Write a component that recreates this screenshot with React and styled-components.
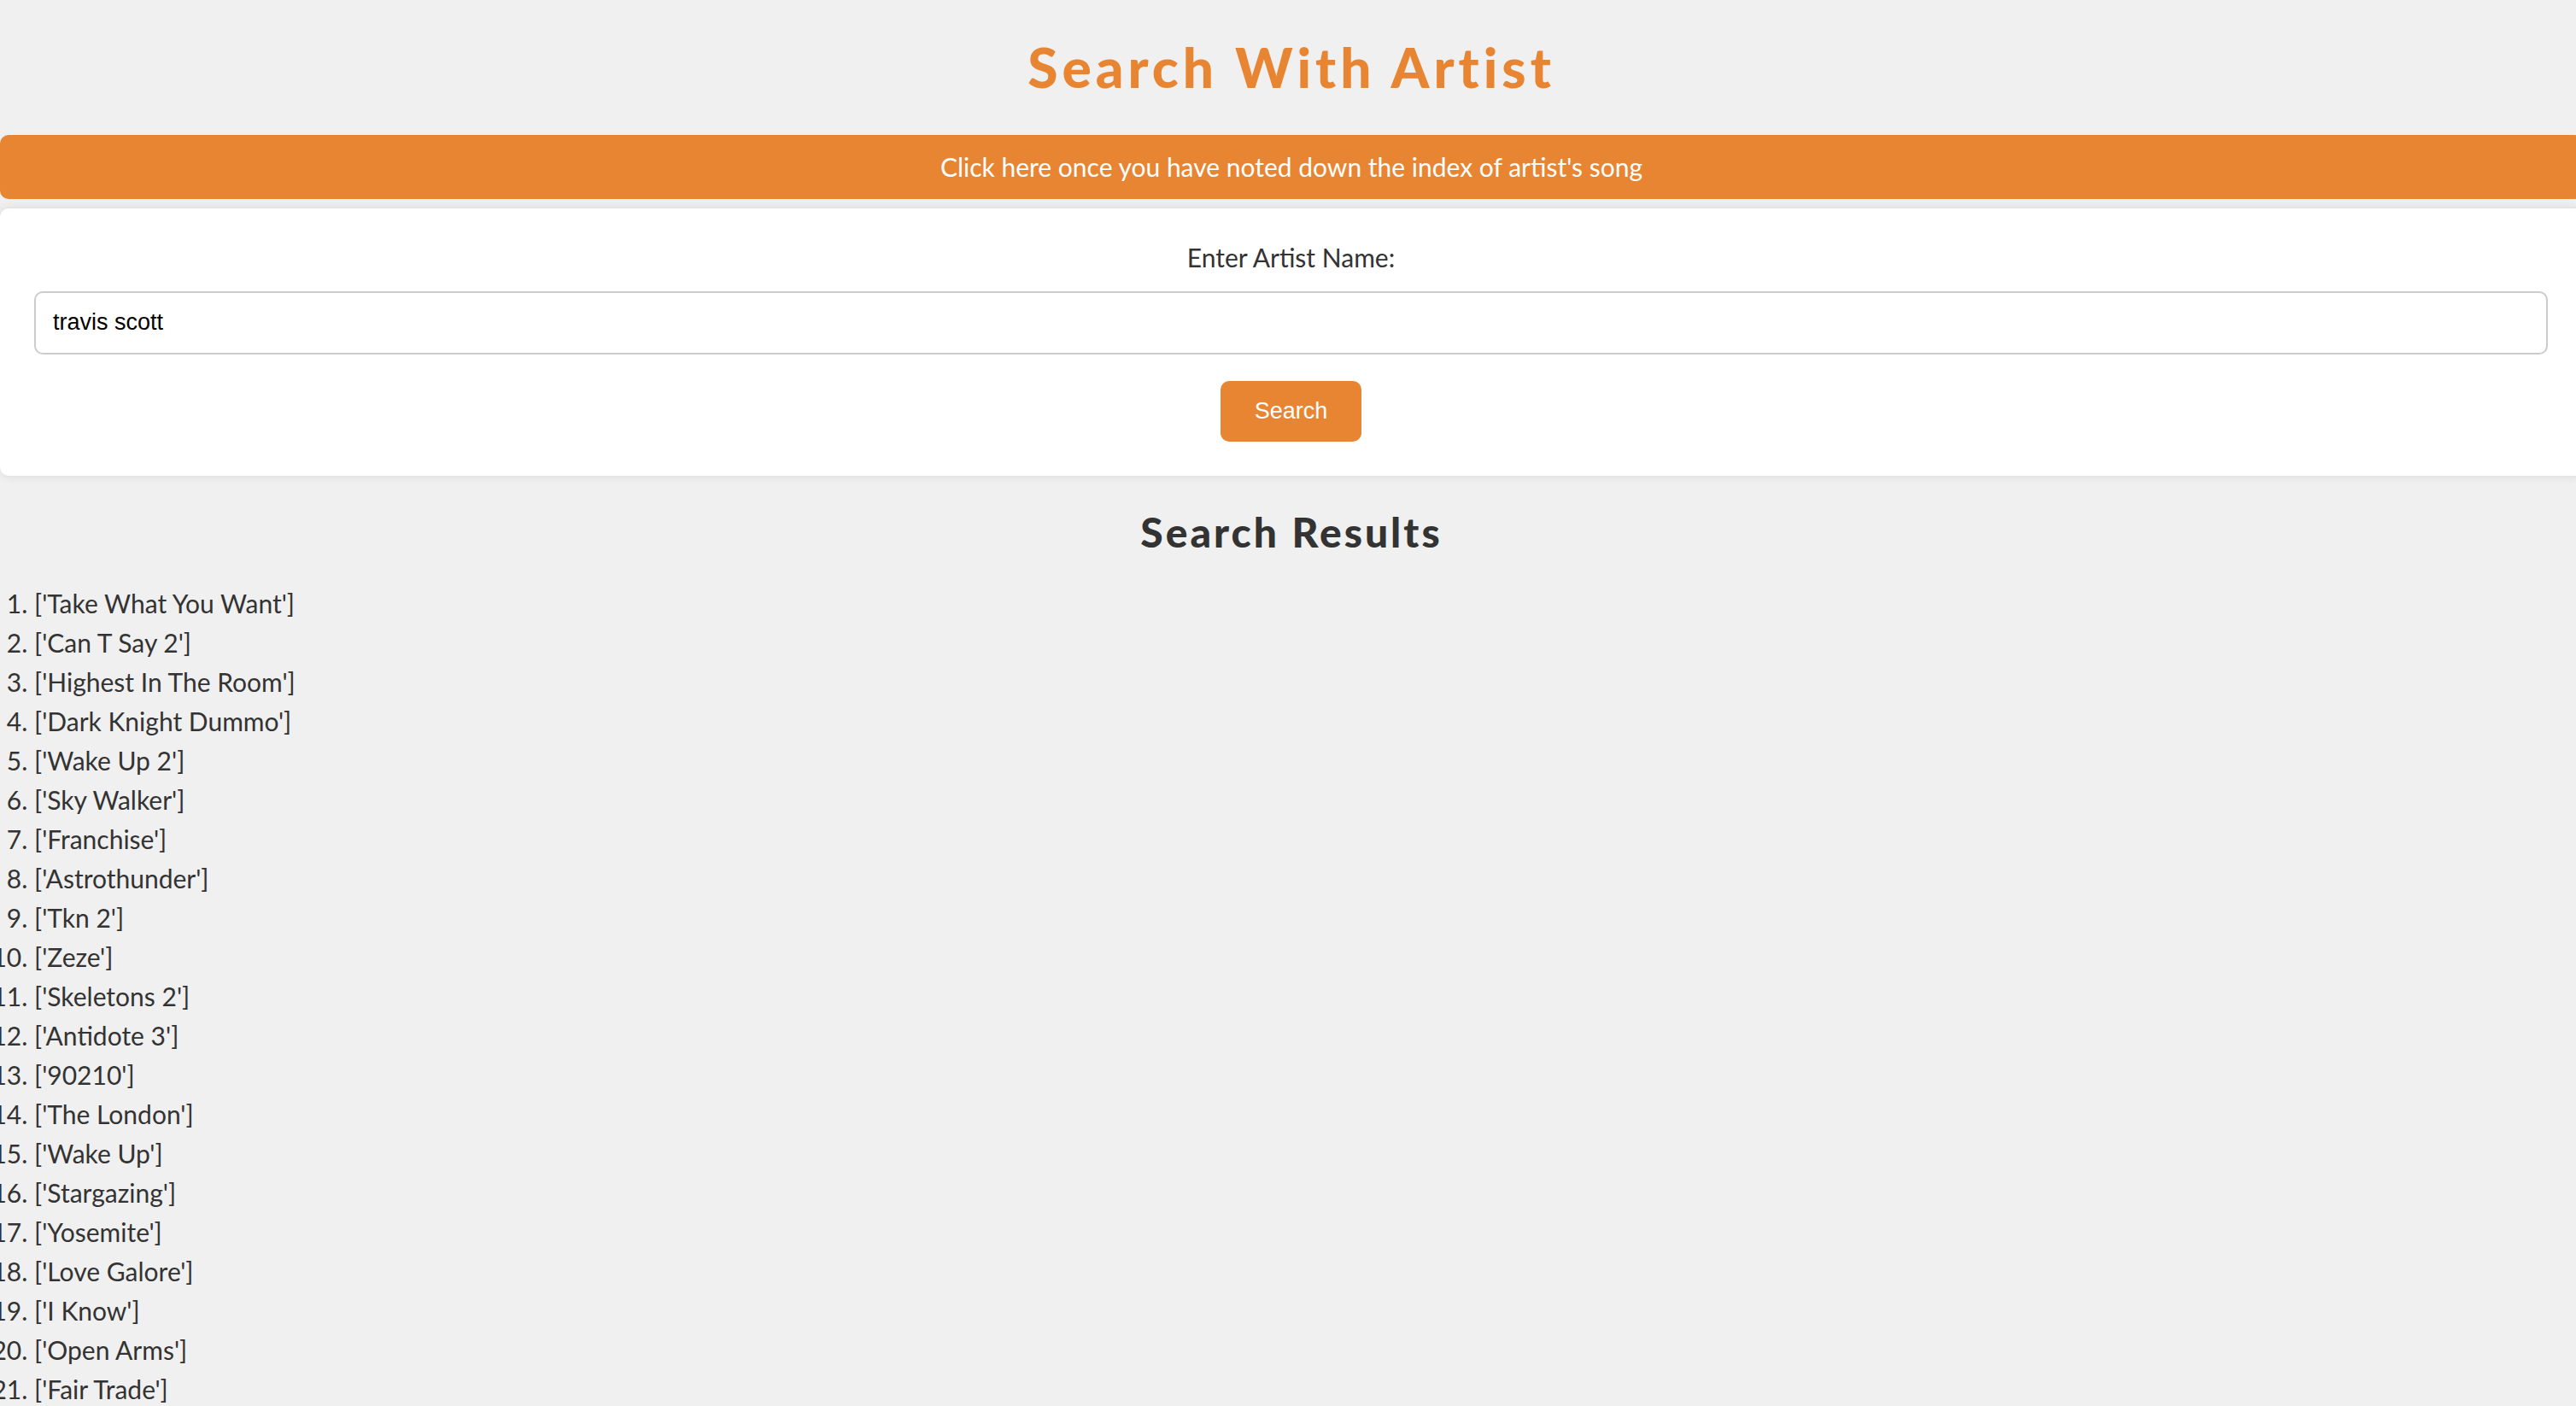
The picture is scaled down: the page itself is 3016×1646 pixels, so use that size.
import React from "react";
import styled, { createGlobalStyle } from "styled-components";

const GlobalStyle = createGlobalStyle`
  html, body {
    margin: 0;
    padding: 0;
    background: #f0f0f0;
    overflow-x: hidden;
  }
  body {
    font-family: "Lato", "Open Sans", sans-serif;
    color: #333;
  }
`;

const ORANGE = "#e78532";

const Page = styled.div`
  width: calc(100% + 8px);
  display: flex;
  flex-direction: column;
`;

const Title = styled.h1`
  margin: 41px 0 40px;
  font-size: 64px;
  line-height: 1.2;
  font-weight: 900;
  letter-spacing: 5px;
  text-align: center;
  color: ${ORANGE};
`;

const NoteBar = styled.button`
  display: block;
  width: 100%;
  height: 75px;
  border: none;
  border-radius: 10px;
  background: ${ORANGE};
  color: #fff;
  font-family: "Lato", sans-serif;
  font-size: 30px;
  text-align: center;
  cursor: pointer;
`;

const Card = styled.form`
  margin-top: 11px;
  background: #fff;
  border-radius: 10px;
  box-shadow: 0 0 12px rgba(0, 0, 0, 0.1);
  padding: 38px 41px 40px 40px;
  display: flex;
  flex-direction: column;
  align-items: center;
`;

const Label = styled.label`
  display: block;
  font-size: 30px;
  line-height: 38px;
  color: #333;
  margin-bottom: 21px;
`;

const Input = styled.input`
  box-sizing: border-box;
  width: 100%;
  height: 74px;
  padding: 0 20px;
  border: 2px solid #ccc;
  border-radius: 10px;
  font-family: "Liberation Sans", Arial, sans-serif;
  font-size: 27px;
  color: #000;
  outline: none;
`;

const SearchButton = styled.button`
  margin-top: 31px;
  height: 71px;
  padding: 0 40px;
  border: none;
  border-radius: 10px;
  background: ${ORANGE};
  color: #fff;
  font-family: "Liberation Sans", Arial, sans-serif;
  font-size: 27px;
  cursor: pointer;
`;

const ResultsHeading = styled.h2`
  margin: 37px 0 32px;
  font-size: 48px;
  line-height: 1.2;
  font-weight: 900;
  letter-spacing: 3px;
  text-align: center;
  color: #333;
`;

const ResultList = styled.ol`
  margin: 0;
  padding-left: 40px;
`;

const ResultItem = styled.li`
  font-size: 30px;
  line-height: 46px;
  color: #333;
`;

const songs = [
  "Take What You Want",
  "Can T Say 2",
  "Highest In The Room",
  "Dark Knight Dummo",
  "Wake Up 2",
  "Sky Walker",
  "Franchise",
  "Astrothunder",
  "Tkn 2",
  "Zeze",
  "Skeletons 2",
  "Antidote 3",
  "90210",
  "The London",
  "Wake Up",
  "Stargazing",
  "Yosemite",
  "Love Galore",
  "I Know",
  "Open Arms",
  "Fair Trade",
];

export default function App() {
  return (
    <Page>
      <GlobalStyle />
      <Title>Search With Artist</Title>
      <NoteBar type="button">
        Click here once you have noted down the index of artist's song
      </NoteBar>
      <Card onSubmit={(e) => e.preventDefault()}>
        <Label htmlFor="artist">Enter Artist Name:</Label>
        <Input id="artist" type="text" defaultValue="travis scott" />
        <SearchButton type="submit">Search</SearchButton>
      </Card>
      <ResultsHeading>Search Results</ResultsHeading>
      <ResultList>
        {songs.map((song) => (
          <ResultItem key={song}>['{song}']</ResultItem>
        ))}
      </ResultList>
    </Page>
  );
}
